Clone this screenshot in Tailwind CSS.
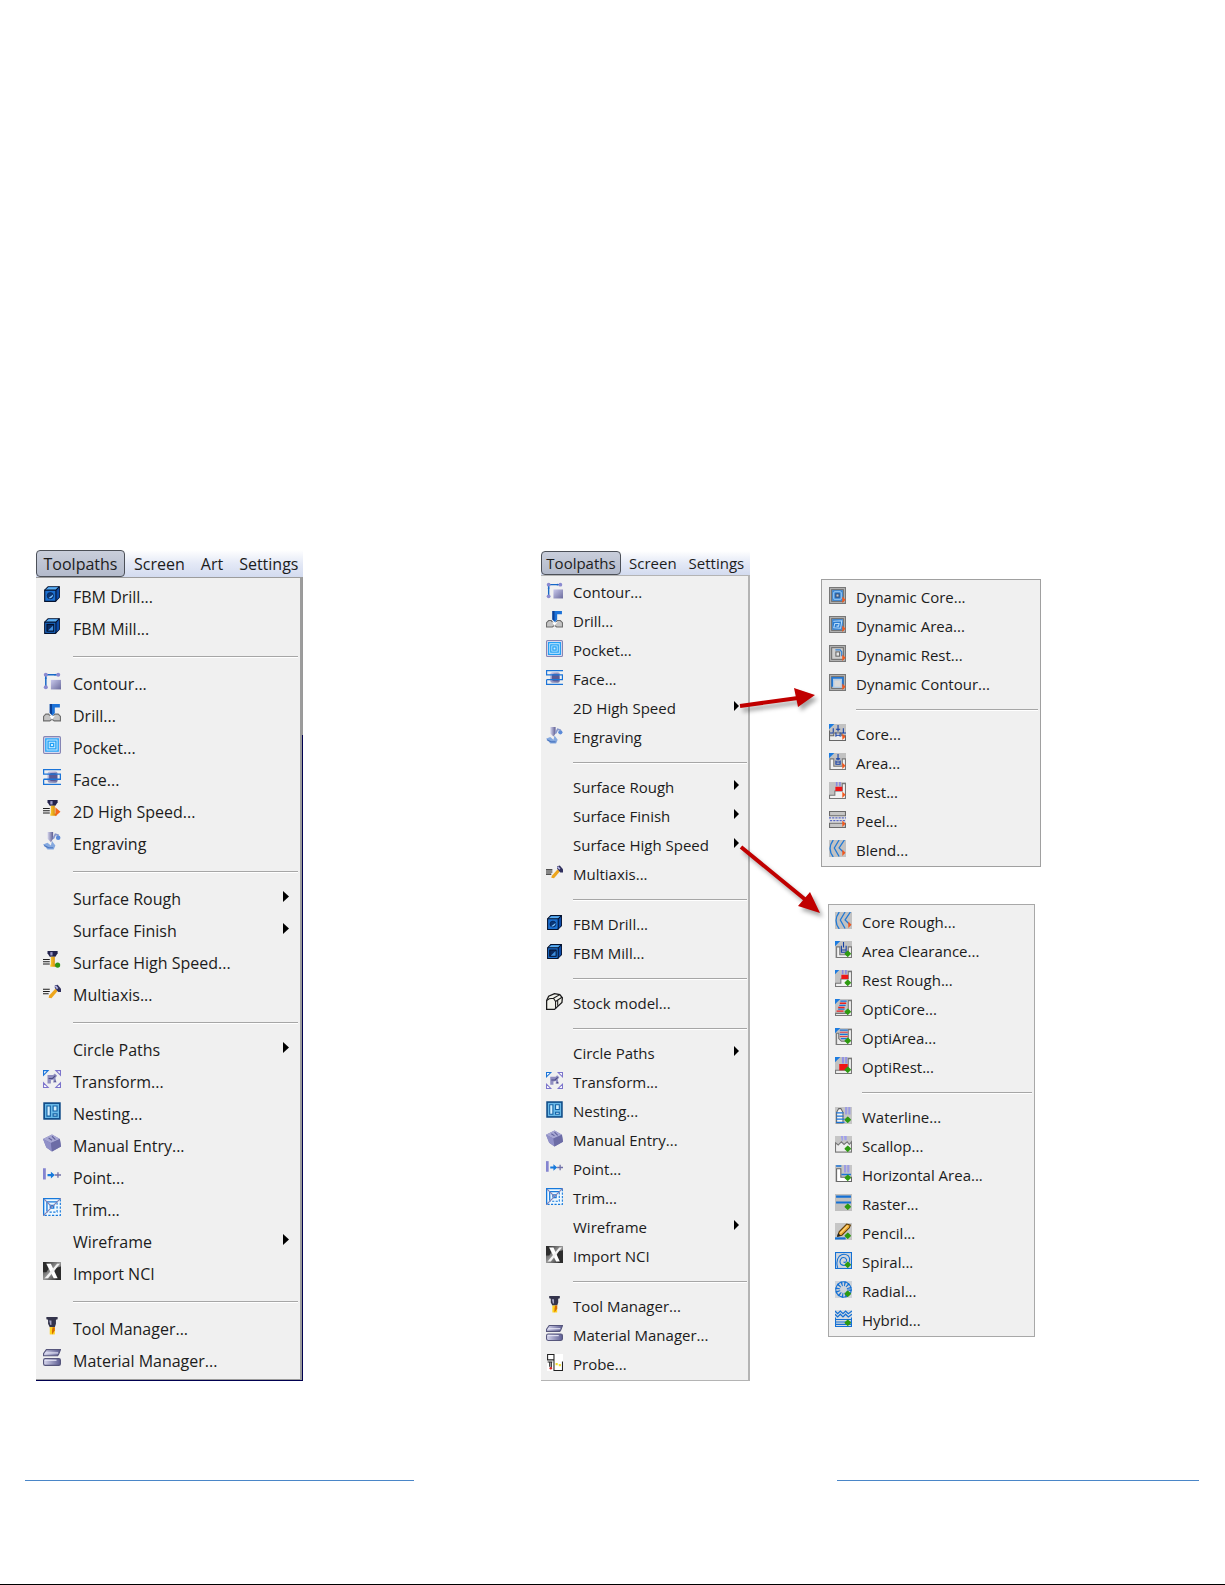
<!DOCTYPE html>
<html lang="en">
  <head>
    <meta charset="UTF-8" />
    <meta name="viewport" content="width=device-width, initial-scale=1.0" />
    <title>Toolpaths Menu</title>
    <script src="https://cdn.jsdelivr.net/npm/@tailwindcss/browser@4"></script>
  </head>
  <body
    class="min-h-screen flex flex-col bg-white border-b border-black font-['Open_Sans','Noto_Sans',sans-serif] text-[#1c1c1c]"
  >
    <!-- icon set, 16x16 grid -->
    <svg class="size-0" aria-hidden="true">
      <defs>
        <linearGradient id="violet" x1="0" y1="0" x2="1" y2="1">
          <stop offset="0" stop-color="#c9c9ec" />
          <stop offset="1" stop-color="#6a6a9c" />
        </linearGradient>
        <linearGradient id="bar" x1="0" y1="0" x2="1" y2="0">
          <stop offset="0" stop-color="#d8d8ee" />
          <stop offset="1" stop-color="#5c5c92" />
        </linearGradient>
        <linearGradient id="gold" x1="0" y1="0" x2="1" y2="0">
          <stop offset="0" stop-color="#ffcf30" />
          <stop offset="1" stop-color="#c87800" />
        </linearGradient>
        <linearGradient id="metal" x1="0" y1="0" x2="1" y2="1">
          <stop offset="0" stop-color="#222" />
          <stop offset="0.5" stop-color="#999" />
          <stop offset="1" stop-color="#111" />
        </linearGradient>
      </defs>
      <symbol id="cube" viewBox="0 0 16 16">
        <path d="M1.5 4.5 4.5 1.5H14.5V11L11 14.5H1.5Z" fill="#1b6fd0" stroke="#05122e" />
        <path d="M2 4.5 5 2H14L11.5 4.5Z" fill="#5cb0f5" />
        <path d="M11.5 4.5 14 2V11L11.5 14Z" fill="#0b4aa8" />
        <path d="M1.5 4.5H11.500V14.500M11.500 4.500 14.500 1.500" fill="none" stroke="#05122e" />
      </symbol>
      <symbol id="fbm-drill" viewBox="0 0 16 16">
        <use href="#cube" />
        <circle cx="6.500" cy="9.500" r="2.800" fill="#0a3576" stroke="#07214e" stroke-width=".6" />
        <path d="M5 11.500A3 3 0 0 0 9 8.500Z" fill="#7cc4ff" />
      </symbol>
      <symbol id="fbm-mill" viewBox="0 0 16 16">
        <use href="#cube" />
        <path d="M3.500 6.500H9.500V12.500H3.500Z" fill="#0a2a60" stroke="#04112c" />
        <path d="M4.500 12 9 7.500V12Z" fill="#3f8fe0" />
      </symbol>
      <symbol id="contour" viewBox="0 0 16 16">
        <path d="M2.500 13V2.500H13" fill="none" stroke="#1668c8" stroke-width="1.300" />
        <circle cx="2.500" cy="2.500" r="1.800" fill="#8a8ad0" />
        <circle cx="13.500" cy="2.500" r="1.800" fill="#8a8ad0" />
        <circle cx="2.500" cy="13.500" r="1.800" fill="#8a8ad0" />
        <path d="M1.500 6 2.500 4 3.500 6ZM11 1.500 9.500 2.500 11 3.500Z" fill="#1668c8" />
        <rect x="7" y="7" width="9" height="8.500" fill="url(#violet)" />
      </symbol>
      <symbol id="drill" viewBox="0 0 16 16">
        <path d="M.5 15V11L2.500 9H5L8 13 10.500 9H13.500L15.500 11V15H10L8 13.500 6 15Z" fill="#c4c4c4" stroke="#6d6d6d" />
        <path d="M6 0H15V3H10.500V8L8.500 10.500 6 8Z" fill="#1c72d8" />
        <path d="M6 0H8V9.500L6 8Z" fill="#0c3f94" />
        <path d="M5.500 10.500 8 14 11 10 8.500 10.800Z" fill="#fff" />
      </symbol>
      <symbol id="pocket" viewBox="0 0 16 16">
        <rect x=".5" y=".5" width="15" height="15" rx="1" fill="#d9d9ef" stroke="#8585b4" />
        <rect x="2" y="2" width="12" height="12" fill="#d3efff" />
        <path d="M2.500 2.500H13.500V13.500H2.500ZM4.500 4.500H11.500V11.500H4.500ZM6.500 6.500H9.500V9.500H6.500Z" fill="none" stroke="#22a0f5" stroke-width="1.200" />
      </symbol>
      <symbol id="face" viewBox="0 0 16 16">
        <rect x="4" y="3" width="9" height="10" rx="2" fill="url(#violet)" />
        <rect x="5.500" y="4.500" width="7" height="7" rx="2" fill="#5a5a94" />
        <path d="M0 1.500H16M.5 1.500V5.500H15.500V10H.5M.5 10V14.500H16" fill="none" stroke="#1b74d8" stroke-width="1.200" />
      </symbol>
      <symbol id="cutter" viewBox="0 0 16 16">
        <path d="M4 0H13V2L11 5H6L4 2Z" fill="#23234c" />
        <path d="M6.500 1H8.500V4H6.500Z" fill="#9c9ccc" />
        <path d="M7 5H10.500V12H12V14H6.500V12H7Z" fill="url(#gold)" />
        <path d="M0 7.500H6M0 9.500H6M0 11.500H6" stroke="#1d1d1d" />
      </symbol>
      <symbol id="speed-2d" viewBox="0 0 16 16">
        <use href="#cutter" />
        <path d="M11 6.500 15.500 10.500 11 14.500Z" fill="#f4661a" />
      </symbol>
      <symbol id="speed-surface" viewBox="0 0 16 16">
        <use href="#cutter" />
        <circle cx="13" cy="12.500" r="2.300" fill="#2e9414" />
      </symbol>
      <symbol id="engraving" viewBox="0 0 16 16">
        <path d="M0 11 4 9.500 7 12 8 8 11 12 9.500 15.500H4L2 13Z" fill="#86a9df" />
        <path d="M1 12 5 14 9 14" stroke="#4a76c0" fill="none" />
        <path d="M4 0H9V6L7 9 4 6Z" fill="url(#bar)" />
        <path d="M9 6 11 2 14 3" fill="none" stroke="#8797cc" stroke-width="1.500" />
        <circle cx="13.500" cy="5" r="2" fill="#5b8ad8" />
      </symbol>
      <symbol id="multiaxis" viewBox="0 0 16 16">
        <path d="M0 5.500H6M0 7.500H6M0 9.500H5" stroke="#1d1d1d" />
        <path d="M11 5 13 7 7.500 13.500 5 13 5.500 11Z" fill="#eda51c" />
        <path d="M10.500 2 13 1.500 16 5V8L13.500 8 10.500 4.500Z" fill="#30305e" />
        <path d="M11 2.500 13 5" stroke="#b4b4e4" stroke-width="1.500" />
      </symbol>
      <symbol id="transform" viewBox="0 0 16 16">
        <path d="M.5 4.500V.5H4.500Z" fill="#fff" stroke="#1b74d8" />
        <path d="M11.500.5H15.500V4.500ZM.5 11.500V15.500H4.500ZM15.500 11.500V15.500H11.500Z" fill="#fff" stroke="#7c74cc" />
        <path d="M4 4.500H9L10.500 3 12.500 5 11 7 12 11H9L9.500 8.500 7 9V12H4Z" fill="#8f8dc0" />
        <path d="M5 7.500H8.500L11 5M10 10H11.500" fill="none" stroke="#4c4c84" />
      </symbol>
      <symbol id="nesting" viewBox="0 0 16 16">
        <rect x="1" y="1" width="14" height="14" fill="#69b9e8" stroke="#104c88" stroke-width="1.500" />
        <path d="M3.500 3.500H6.500V12.500H3.500ZM9 3.500H12.500V8H9ZM9 10.500H12.500V12.500H9Z" fill="#d4f0ff" stroke="#1260a4" />
      </symbol>
      <symbol id="manual" viewBox="0 0 16 16">
        <path d="M0 4.500 8 .5 15 4.500 16 11 8 15.500 3 12Z" fill="#7b7bb4" />
        <path d="M0 4.500 8 .5 15 4.500 7 8Z" fill="#a8a8d4" />
        <path d="M7 8 8 15.500 3 12 0 4.500Z" fill="#9090c8" />
        <path d="M5 3.500 8 5.500M8 2 11 5" stroke="#62629c" />
        <path d="M7 8 15 4.500 16 11 8 15.500Z" fill="#6c6ca6" />
      </symbol>
      <symbol id="point" viewBox="0 0 16 16">
        <rect x="0" y="2" width="2.500" height="10" fill="#8484d0" />
        <path d="M4 7H7V5L10.500 8 7 11V9H4Z" fill="#1679dc" />
        <path d="M10.500 8H16M13.300 5.500V10.500" stroke="#7070a8" stroke-width="1.200" />
      </symbol>
      <symbol id="trim" viewBox="0 0 16 16">
        <rect x=".5" y=".5" width="15" height="15" fill="#eef8ff" />
        <path d="M.6 15.500V.6H15.400M3.500 12V3.500H12.500M6.500 9V6.500H9.500V9H6.500" fill="none" stroke="#1679dc" stroke-width="1.200" />
        <path d="M15.400 1V15.400H1M12.500 4V12.500H4" fill="none" stroke="#1679dc" stroke-dasharray="2 1.300" />
        <path d="M0 16 16 0M1 1 8 8" stroke="#8080b4" fill="none" />
      </symbol>
      <symbol id="nci" viewBox="0 0 16 16">
        <rect width="16" height="16" fill="url(#metal)" />
        <path d="M0 0H2L5 6 3 9H0ZM12 16 9 10 12 5 16 4V16Z" fill="#2c2c2c" />
        <path d="M3 1.500H7L13 14.500H9.500Z" fill="#fff" />
        <path d="M12.500 1.500H15L4.500 14.500H1.500Z" fill="#f2f2f2" />
      </symbol>
      <symbol id="tool" viewBox="0 0 16 16">
        <path d="M3 0H13V2L11.500 2.500V6L10.500 9H6L4.500 6V2.500L3 2Z" fill="#34344c" />
        <path d="M5.500 3H7.500V7H6.500Z" fill="#a4a4c4" />
        <path d="M6 9H10.500V15.500H6Z" fill="#ffd21c" />
        <path d="M8.500 9H10.500V12L8 15.500V12Z" fill="#d66c00" />
      </symbol>
      <symbol id="material" viewBox="0 0 16 16">
        <path d="M.5 4 3 .5H15.500L14 4.500 13 6H.5Z" fill="url(#bar)" stroke="#56567c" />
        <path d="M2 3.500H13.500" stroke="#e8e8f8" />
        <rect x=".5" y="8.500" width="15" height="6" rx="1.500" fill="url(#bar)" stroke="#56567c" />
        <path d="M1.500 10H12" stroke="#e8e8f8" />
      </symbol>
      <symbol id="stock" viewBox="0 0 16 16">
        <path d="M.6 7 2.500 3 8 .6 13 1.500 15.400 4.500 15 9 8 15.400H.6Z" fill="#f1f1ea" stroke="#1a1a1a" stroke-width="1.200" />
        <path d="M1 7 3 5.500 7 5 9 8V15M9 8 15 4M7 5 13 1.500M11 7V12" fill="none" stroke="#1a1a1a" />
      </symbol>
      <symbol id="probe" viewBox="0 0 16 16">
        <rect x="1" y="0" width="15" height="16" fill="#fff" />
        <path d="M1.500 0V5.500H7.500V0M1.500 .5H7.500M1.500 7.500H6M3.500 8V12M5 8V13M7.500 6V15.500H15.500V7" fill="none" stroke="#222" />
        <circle cx="4.500" cy="13.500" r="1.200" fill="#d22" />
        <path d="M9 9.500H11M12 10.500H14" stroke="#f2dd30" stroke-width="2" />
      </symbol>
      <symbol id="frame" viewBox="0 0 16 16">
        <rect x=".5" y=".5" width="15" height="15" fill="#b4b4b4" stroke="#777" />
        <rect x="2.500" y="2.500" width="11" height="11" fill="#cfcfcf" stroke="#6c6c6c" />
      </symbol>
      <symbol id="go" viewBox="0 0 16 16">
        <path d="M12.500 9 15.500 12 12.500 15Z" fill="#f4581c" />
      </symbol>
      <symbol id="dyn-core" viewBox="0 0 16 16">
        <use href="#frame" />
        <rect x="3" y="3" width="10" height="10" fill="#2c7cd0" />
        <rect x="4.500" y="4.500" width="7" height="7" rx="1" fill="none" stroke="#a7d3f7" />
        <rect x="6.500" y="6.500" width="3" height="3" fill="#c8c8c8" stroke="#2c4c7c" />
        <use href="#go" />
      </symbol>
      <symbol id="dyn-area" viewBox="0 0 16 16">
        <use href="#frame" />
        <rect x="3" y="3" width="10" height="10" fill="#2c7cd0" />
        <path d="M4 5 12 4.500 11 11.500 4.500 11 5.500 7 9.500 7 9 9.500H7" fill="none" stroke="#b9dcf9" />
        <use href="#go" />
      </symbol>
      <symbol id="dyn-rest" viewBox="0 0 16 16">
        <use href="#frame" />
        <rect x="6.500" y="6.500" width="3.500" height="4" fill="#e6e6e6" stroke="#666" />
        <path d="M6 4.500H10.500L12 6.500V10.500" fill="none" stroke="#3482d4" stroke-width="1.200" />
        <use href="#go" />
      </symbol>
      <symbol id="dyn-contour" viewBox="0 0 16 16">
        <use href="#frame" />
        <path d="M3 12V3.700H13V12" fill="none" stroke="#2478d4" stroke-width="1.600" />
        <rect x="4.500" y="5.500" width="7" height="7" fill="#d9d9d9" stroke="#a9c9e9" />
        <use href="#go" />
      </symbol>
      <symbol id="part" viewBox="0 0 16 16">
        <rect width="16" height="16" fill="#c2c2c2" />
        <path d="M0 0H5L0 5Z" fill="#1b7be0" />
      </symbol>
      <symbol id="core" viewBox="0 0 16 16">
        <use href="#part" />
        <path d="M.5 6V15.500H15.500V11H12V8.500H4.500V11H.5" fill="#eee" stroke="#666" />
        <path d="M8.500 1V7M6.500 5H10.500M4 4V8M13.500 4V8M1 8.500H4M12 8.500H16M6.500 10.500H10.500M6.500 8V12M10.500 8V12" fill="none" stroke="#153fa4" />
        <use href="#go" />
      </symbol>
      <symbol id="area" viewBox="0 0 16 16">
        <use href="#part" />
        <path d="M1 5.500H4.500V12.500H12.500V5.500H15.500V15.500H1Z" fill="#f2f2f2" stroke="#777" />
        <path d="M8.500 1V7M6.500 5.500H10.500M6 8.500H11M6 10.500H11M6.500 7V11M10.500 7V11" fill="none" stroke="#153fa4" />
        <use href="#go" />
      </symbol>
      <symbol id="rest-part" viewBox="0 0 16 16">
        <rect width="16" height="16" fill="#c2c2c2" />
        <path d="M6.500 0H8V4H6.500ZM9.500 0H11V4H9.500Z" fill="#8a8ae0" />
        <path d="M.5 15.500V12.500H5.500V8.500H12.500V1.500H15.500V15.500Z" fill="#f2f2f2" stroke="#777" />
        <rect x="6" y="4.500" width="6.500" height="4" fill="#ee1616" />
      </symbol>
      <symbol id="rest" viewBox="0 0 16 16">
        <use href="#rest-part" />
        <use href="#go" />
      </symbol>
      <symbol id="peel" viewBox="0 0 16 16">
        <rect width="16" height="16" fill="#e0e0e0" />
        <path d="M.5.5H15.500V4.500H.5ZM.5 11.500H15.500V15.500H.5Z" fill="#c6c6c6" stroke="#6b6b6b" />
        <path d="M0 6.500H16M1 9H16" stroke="#5868c4" stroke-width="1.200" stroke-dasharray="2 1" />
        <use href="#go" />
      </symbol>
      <symbol id="blend" viewBox="0 0 16 16">
        <rect width="16" height="16" fill="#c2c2c2" />
        <path d="M4 0Q-2 8 4 16M9.500 0 5 7.500 9.500 15.500M14.500 0 9.500 7.500 14.500 12.500" fill="none" stroke="#2079d6" stroke-width="1.200" />
        <use href="#go" />
      </symbol>
      <symbol id="diamond" viewBox="0 0 16 16">
        <path d="M12 9.500 14.500 12 12 14.500 9.500 12Z" fill="#2e9a10" stroke="#2e9a10" stroke-linejoin="round" />
      </symbol>
      <symbol id="area-clear" viewBox="0 0 16 16">
        <use href="#part" />
        <path d="M1.500 5.500H4.500V13H12.500V5.500H15.500V15.500H1.500Z" fill="#f2f2f2" stroke="#777" />
        <path d="M8 1V6M6 4.500V11M10.500 4.500V11M6 8.500H11M6 10.500H10" fill="none" stroke="#153fa4" />
        <use href="#diamond" />
      </symbol>
      <symbol id="rest-rough" viewBox="0 0 16 16">
        <use href="#rest-part" />
        <path d="M0 0H4L0 4Z" fill="#1b7be0" />
        <use href="#diamond" />
      </symbol>
      <symbol id="opti-core" viewBox="0 0 16 16">
        <use href="#part" />
        <path d="M12.500 1.500H15.500V15.500H.5V13.500H11L12.500 10Z" fill="#eee" stroke="#777" />
        <path d="M5 2H11M4 6H10M3 9.500H9" stroke="#1b74d8" stroke-width="1.200" />
        <path d="M4.500 4H10.500M3 8H9M1.500 11.500H8" stroke="#ee2020" stroke-width="1.200" />
        <use href="#diamond" />
      </symbol>
      <symbol id="opti-area" viewBox="0 0 16 16">
        <use href="#part" />
        <path d="M1.500 5V15.500H15.500V1.500H12.500V10L10 12.500H6L3.500 10V5Z" fill="#eee" stroke="#777" />
        <path d="M4.500 2H12M4.500 6H12M5.500 10H11" stroke="#1b74d8" stroke-width="1.200" />
        <path d="M4.500 4H12M4.500 8H12" stroke="#e04050" />
        <use href="#diamond" />
      </symbol>
      <symbol id="opti-rest" viewBox="0 0 16 16">
        <use href="#part" />
        <path d="M6.500 0H8.500V6H6.500ZM9.500 0H11.500V6H9.500Z" fill="#9494e4" />
        <path d="M12.500 1.500H15.500V15.500H.5V12.500H12.500Z" fill="#eee" stroke="#777" />
        <path d="M4 6.500H12V10L9 12.500H4Z" fill="#f01414" />
        <use href="#diamond" />
      </symbol>
      <symbol id="waterline" viewBox="0 0 16 16">
        <rect width="16" height="16" fill="#c6c6c6" />
        <path d="M9.500 0H11.500V7H9.500ZM12.500 0H14.500V7H12.500Z" fill="#9c9ce4" />
        <path d="M1.500 15V5L3.500 1.500H5.500L7.500 5V15Z" fill="#f4f4f4" stroke="#666" />
        <path d="M1 5.500H8M1 8.500H8M1 11.500H9M1 14.500H9" stroke="#1b74d8" stroke-width="1.200" />
        <use href="#diamond" />
      </symbol>
      <symbol id="scallop" viewBox="0 0 16 16">
        <rect width="16" height="16" fill="#c6c6c6" />
        <path d="M5.500 0H7.500V4L6.500 5ZM8.500 0H11V4H9Z" fill="#a0a0ec" />
        <path d="M.5 15V6.500L3 8.500 6 5.500 8.500 8 11.500 5.500 13.500 8 15.500 5.500V15Z" fill="#eee" stroke="#777" />
        <use href="#diamond" />
      </symbol>
      <symbol id="horizontal" viewBox="0 0 16 16">
        <rect width="16" height="16" fill="#c6c6c6" />
        <path d="M1.500 3.500H5.500V11.500H15.500V15.500H1.500Z" fill="#fff" stroke="#666" />
        <path d="M1 1H6M6 9H15" stroke="#1b74d8" stroke-width="1.500" />
        <path d="M8.500 0H10.500V7H8.500ZM11.500 0H13.500V7H11.500Z" fill="#9c9ce4" />
        <use href="#diamond" />
      </symbol>
      <symbol id="raster" viewBox="0 0 16 16">
        <rect width="16" height="16" fill="#c0c0c0" />
        <path d="M1 2.500H15M1 8H15" stroke="#1470d4" stroke-width="2" />
        <use href="#diamond" />
      </symbol>
      <symbol id="pencil" viewBox="0 0 16 16">
        <rect width="16" height="16" fill="#c6c6c6" />
        <path d="M0 14.500H10" stroke="#1470d4" stroke-width="2" />
        <path d="M2.500 12.500 4 8 11 1 14.500 2 13.500 4.500 6.500 11.500Z" fill="#f0ab34" stroke="#5c3c08" />
        <path d="M2 13 3 9.500 5.500 12Z" fill="#222" />
        <path d="M5 9.500 12 2.500" stroke="#ffdc8c" />
        <use href="#diamond" />
      </symbol>
      <symbol id="spiral" viewBox="0 0 16 16">
        <rect x=".5" y=".5" width="15" height="15" fill="#d2d6dc" stroke="#1470d4" />
        <path d="M2.500 15Q.5 8 4 4 8 .5 12.500 3.500 15 7 12.500 11 9 14 5.500 11.500 3.500 8 6.500 5.500 10 4.500 11 7.500 10.500 10.500 8 9.500" fill="none" stroke="#1470d4" />
        <use href="#diamond" />
      </symbol>
      <symbol id="radial" viewBox="0 0 16 16">
        <rect width="16" height="16" fill="#cfd4da" />
        <circle cx="8" cy="8" r="5.500" fill="none" stroke="#1470d4" stroke-width="4.500" stroke-dasharray="1.200 1.680" />
        <circle cx="8" cy="8" r="7.300" fill="none" stroke="#1470d4" />
        <use href="#diamond" />
      </symbol>
      <symbol id="hybrid" viewBox="0 0 16 16">
        <rect width="16" height="16" fill="#d4dbe2" />
        <path d="M0 1 2.500 3.500 5 1 7.500 3.500 10 1 12.500 3.500 16 1M0 4 2.500 6.500 5 4 7.500 6.500 10 4 12.500 6.500 16 4" fill="none" stroke="#1470d4" stroke-width="1.200" />
        <path d="M.5 7V15.500H15.500V7M1 9H15M1 11.300H15M1 13.500H15" fill="none" stroke="#1470d4" />
        <use href="#diamond" />
      </symbol>
    </svg>

    <main class="flex items-start pt-[550px] pl-9">
      <section class="w-[267px] shrink-0">
        <nav
          class="flex h-[27px] items-center bg-linear-to-b from-white via-[#e4e9f6] to-[#d3dbef] text-base"
        >
          <button
            class="h-[27px] w-[89px] shrink-0 rounded-[4px] border border-[#4c5058] bg-linear-to-b from-[#c9cedb] to-[#b3bacb]"
          >
            Toolpaths
          </button>
          <button class="ml-[9px]">Screen</button>
          <button class="ml-4">Art</button>
          <button class="ml-4">Settings</button>
        </nav>
        <div class="bg-[linear-gradient(#999_158px,#000050_158px)] pr-px pb-px">
          <ul
            id="menuLarge"
            class="border-t border-r-2 border-b border-[#9c9c9c] bg-[#f0f0f0] pt-[3px] pb-0.5"
          ></ul>
        </div>
      </section>

      <section class="relative ml-[238px] w-[209px] shrink-0">
        <nav
          class="mt-px flex h-6 items-center bg-linear-to-b from-white via-[#e4e9f6] to-[#d3dbef] text-[15px]"
        >
          <button
            class="h-6 w-20 shrink-0 rounded-[4px] border border-[#4c5058] bg-linear-to-b from-[#c9cedb] to-[#b3bacb]"
          >
            Toolpaths
          </button>
          <button class="ml-2">Screen</button>
          <button class="ml-3">Settings</button>
        </nav>
        <ul
          id="menuSmall"
          class="border-t border-r-2 border-b border-[#b4b4b4] bg-[#f0f0f0] pt-0.5 pb-px"
        ></ul>
        <!-- callout arrows towards the submenus -->
        <svg
          class="absolute top-[130px] left-[194px] z-10 h-[240px] w-[90px] drop-shadow-[3px_4px_2px_rgba(0,0,0,0.35)]"
          viewBox="736 680 90 240"
          aria-hidden="true"
        >
          <path d="M741 706 799 698M742 847 808 901" stroke="#c00000" stroke-width="4" />
          <path d="M795 688 816 695 799 707ZM811 892 821 913 799 906Z" fill="#c00000" />
        </svg>
      </section>

      <section class="ml-[71px] pt-[29px]">
        <ul
          id="menu2d"
          class="w-[220px] border border-[#a0a0a0] bg-[#f0f0f0] pt-[3px] pr-px pb-px pl-0.5"
        ></ul>
        <ul
          id="menuSurface"
          class="mt-[37px] ml-[7px] w-[207px] border border-[#a8a8a8] bg-[#f0f0f0] px-px pt-[3px] pb-px"
        ></ul>
      </section>
    </main>

    <footer class="grid grid-cols-[389fr_423fr_362fr] pt-[99px] pr-[26px] pl-[25px]">
      <hr class="border-t border-[#4a86c8]" />
      <hr class="col-start-3 border-t border-[#4a86c8]" />
    </footer>

    <script>
      // "icon|label", a trailing ">" opens a submenu, "-" is a separator
      const menus = {
        menuLarge: [
          "fbm-drill|FBM Drill...", "fbm-mill|FBM Mill...", "-",
          "contour|Contour...", "drill|Drill...", "pocket|Pocket...", "face|Face...",
          "speed-2d|2D High Speed...", "engraving|Engraving", "-",
          "|Surface Rough>", "|Surface Finish>", "speed-surface|Surface High Speed...",
          "multiaxis|Multiaxis...", "-",
          "|Circle Paths>", "transform|Transform...", "nesting|Nesting...",
          "manual|Manual Entry...", "point|Point...", "trim|Trim...", "|Wireframe>",
          "nci|Import NCI", "-",
          "tool|Tool Manager...", "material|Material Manager...",
        ],
        menuSmall: [
          "contour|Contour...", "drill|Drill...", "pocket|Pocket...", "face|Face...",
          "|2D High Speed>", "engraving|Engraving", "-",
          "|Surface Rough>", "|Surface Finish>", "|Surface High Speed>",
          "multiaxis|Multiaxis...", "-",
          "fbm-drill|FBM Drill...", "fbm-mill|FBM Mill...", "-",
          "stock|Stock model...", "-",
          "|Circle Paths>", "transform|Transform...", "nesting|Nesting...",
          "manual|Manual Entry...", "point|Point...", "trim|Trim...", "|Wireframe>",
          "nci|Import NCI", "-",
          "tool|Tool Manager...", "material|Material Manager...", "probe|Probe...",
        ],
        menu2d: [
          "dyn-core|Dynamic Core...", "dyn-area|Dynamic Area...",
          "dyn-rest|Dynamic Rest...", "dyn-contour|Dynamic Contour...", "-",
          "core|Core...", "area|Area...", "rest|Rest...", "peel|Peel...", "blend|Blend...",
        ],
        menuSurface: [
          "blend|Core Rough...", "area-clear|Area Clearance...", "rest-rough|Rest Rough...",
          "opti-core|OptiCore...", "opti-area|OptiArea...", "opti-rest|OptiRest...", "-",
          "waterline|Waterline...", "scallop|Scallop...", "horizontal|Horizontal Area...",
          "raster|Raster...", "pencil|Pencil...", "spiral|Spiral...", "radial|Radial...",
          "hybrid|Hybrid...",
        ],
      };

      const large = {
        row: "flex h-8 w-full items-center gap-3 pl-[7px] pr-[11px] text-left text-base whitespace-nowrap",
        icon: "mb-1.5 size-[18px] shrink-0",
        arrow: "mb-1.5 ml-auto h-[11px] w-1.5",
        separator: "flex h-[23px] items-center pl-[37px] pr-0.5",
      };
      const small = {
        row: "flex h-[29px] w-full items-center gap-2.5 pl-[5px] pr-[9px] text-left text-[15px] whitespace-nowrap",
        icon: "mb-1 size-[17px] shrink-0",
        arrow: "mb-1.5 ml-auto h-2.5 w-[5px]",
        separator: "flex h-[21px] items-center pl-8 pr-px",
      };

      const renderItem = (item, size) => {
        if (item === "-") {
          return `<li class="${size.separator}"><hr class="h-0.5 w-full border-t border-[#a6a6a6] bg-white" /></li>`;
        }
        const [icon, text] = item.split("|");
        const label = text.replace(">", "");
        const use = icon ? `<use href="#${icon}" />` : "";
        const arrow = text.endsWith(">")
          ? `<svg class="${size.arrow}" viewBox="0 0 6 11" preserveAspectRatio="none" aria-hidden="true"><path d="M0 0 6 5.500 0 11Z" /></svg>`
          : "";
        return `<li><button class="${size.row}"><svg class="${size.icon}" aria-hidden="true">${use}</svg><span>${label}</span>${arrow}</button></li>`;
      };

      for (const id in menus) {
        const size = id === "menuLarge" ? large : small;
        document.getElementById(id).innerHTML = menus[id]
          .map((item) => renderItem(item, size))
          .join("");
      }
    </script>
  </body>
</html>
